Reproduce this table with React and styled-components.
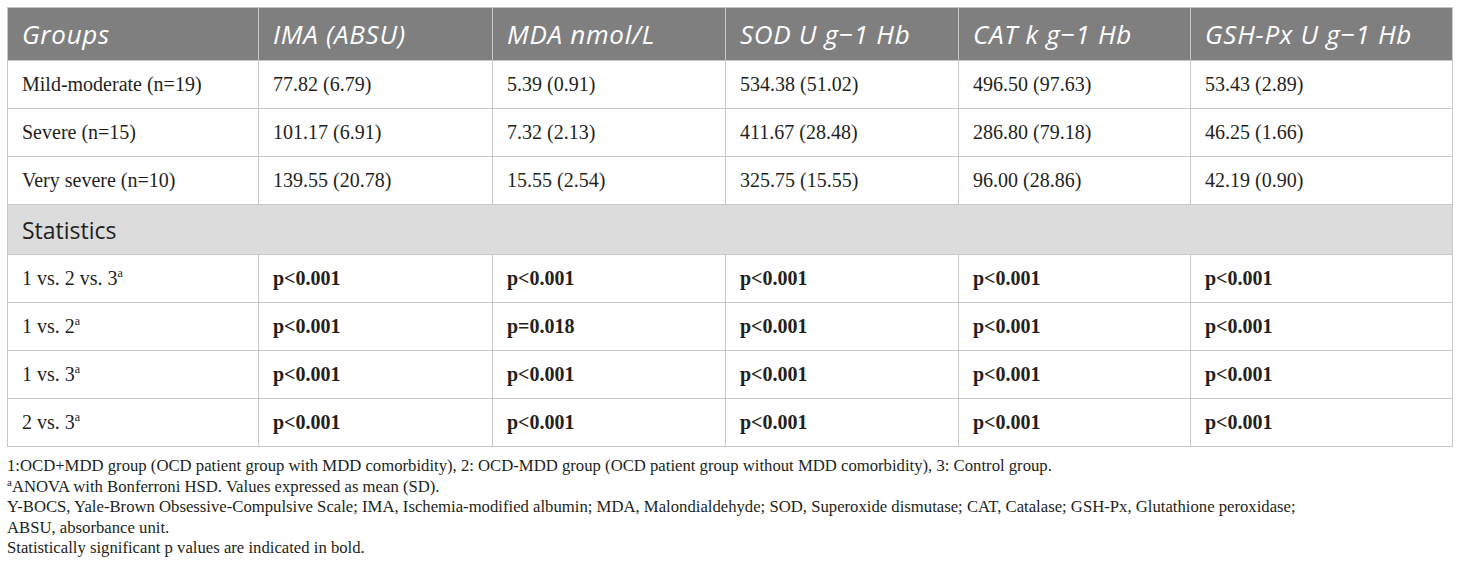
import React from 'react'
import styled, { createGlobalStyle } from 'styled-components'

const Global = createGlobalStyle`
  body {
    margin: 0;
    background: #ffffff;
  }
`

const columns = ['Groups', 'IMA (ABSU)', 'MDA nmol/L', 'SOD U g\u22121 Hb', 'CAT k g\u22121 Hb', 'GSH-Px U g\u22121 Hb']
const widths = [251, 234, 233, 233, 232, 262]

const groups = [
  ['Mild-moderate (n=19)', '77.82 (6.79)', '5.39 (0.91)', '534.38 (51.02)', '496.50 (97.63)', '53.43 (2.89)'],
  ['Severe (n=15)', '101.17 (6.91)', '7.32 (2.13)', '411.67 (28.48)', '286.80 (79.18)', '46.25 (1.66)'],
  ['Very severe (n=10)', '139.55 (20.78)', '15.55 (2.54)', '325.75 (15.55)', '96.00 (28.86)', '42.19 (0.90)'],
]

const stats = [
  ['1 vs. 2 vs. 3', 'p<0.001', 'p<0.001', 'p<0.001', 'p<0.001', 'p<0.001'],
  ['1 vs. 2', 'p<0.001', 'p=0.018', 'p<0.001', 'p<0.001', 'p<0.001'],
  ['1 vs. 3', 'p<0.001', 'p<0.001', 'p<0.001', 'p<0.001', 'p<0.001'],
  ['2 vs. 3', 'p<0.001', 'p<0.001', 'p<0.001', 'p<0.001', 'p<0.001'],
]

function App() {
  return (
    <>
      <Global />
      <Wrap>
        <Table>
          <colgroup>
            {widths.map((w, i) => <col key={i} style={{ width: w }} />)}
          </colgroup>
          <thead>
            <tr>
              {columns.map((c) => <HeadCell key={c}>{c}</HeadCell>)}
            </tr>
          </thead>
          <tbody>
            {groups.map((row) => (
              <tr key={row[0]}>
                {row.map((v, i) => <Cell key={i}>{v}</Cell>)}
              </tr>
            ))}
            <tr>
              <SectionCell colSpan={6}>Statistics</SectionCell>
            </tr>
            {stats.map((row) => (
              <tr key={row[0]}>
                {row.map((v, i) =>
                  i === 0
                    ? <Cell key={i}>{v}<sup>a</sup></Cell>
                    : <Cell key={i} $bold>{v}</Cell>
                )}
              </tr>
            ))}
          </tbody>
        </Table>
        <Notes>
          <p>1:OCD+MDD group (OCD patient group with MDD comorbidity), 2: OCD-MDD group (OCD patient group without MDD comorbidity), 3: Control group.</p>
          <p><sup>a</sup>ANOVA with Bonferroni HSD. Values expressed as mean (SD).</p>
          <p>Y-BOCS, Yale-Brown Obsessive-Compulsive Scale; IMA, Ischemia-modified albumin; MDA, Malondialdehyde; SOD, Superoxide dismutase; CAT, Catalase; GSH-Px, Glutathione peroxidase; ABSU, absorbance unit.</p>
          <p>Statistically significant p values are indicated in bold.</p>
        </Notes>
      </Wrap>
    </>
  )
}

const Wrap = styled.div`
  padding: 7px 8px 0 7px;
  width: 1445px;
`

const Table = styled.table`
  border-collapse: collapse;
  table-layout: fixed;
  width: 1445px;
  border: 1px solid #c8c8c8;
`

const HeadCell = styled.th`
  background: #7f7f7f;
  color: #ffffff;
  font-family: 'Open Sans', sans-serif;
  font-style: italic;
  font-weight: 400;
  font-size: 26px;
  letter-spacing: 0.7px;
  text-align: left;
  white-space: nowrap;
  height: 52px;
  padding: 0 14px;
  border: 1px solid #c8c8c8;
  border-top: none;
  border-bottom: none;
  &:first-child { border-left: none; }
`

const Cell = styled.td`
  font-family: 'Liberation Serif', serif;
  font-size: 20px;
  font-weight: ${(p) => (p.$bold ? 700 : 400)};
  color: #231f20;
  height: 47px;
  padding: 0 14px;
  border: 1px solid #c8c8c8;
  sup {
    font-size: 12px;
    vertical-align: 8px;
    line-height: 0;
  }
`

const SectionCell = styled.td`
  background: #dcdcdc;
  font-family: 'Open Sans', sans-serif;
  font-size: 23px;
  color: #231f20;
  height: 49px;
  padding: 0 14px;
  border: 1px solid #c8c8c8;
`

const Notes = styled.div`
  margin-top: 9px;
  max-width: 1310px;
  font-family: 'Liberation Serif', serif;
  font-size: 16.7px;
  color: #231f20;
  line-height: 20.5px;
  p { margin: 0; }
  sup {
    font-size: 11px;
    vertical-align: 6px;
    line-height: 0;
  }
`

export default App
